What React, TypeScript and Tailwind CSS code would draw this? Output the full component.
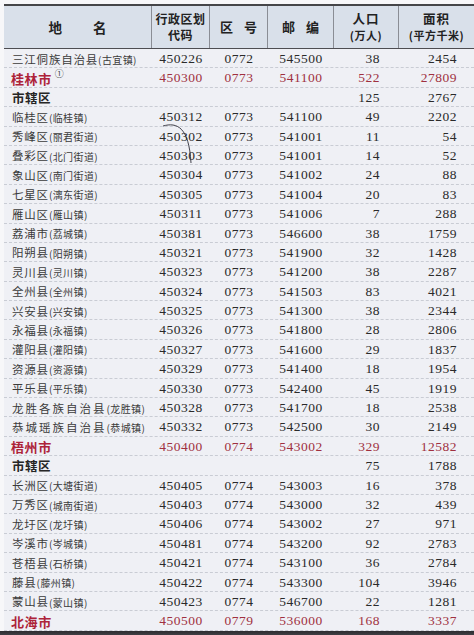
type Row = {
  name: string;
  town?: string;
  code?: string;
  area?: string;
  post?: string;
  pop: string;
  size: string;
  kind?: "city" | "sub";
  wide?: boolean;
  note?: boolean;
};

const rows: Row[] = [
  { name: "三江侗族自治县", town: "古宜镇", code: "450226", area: "0772", post: "545500", pop: "38", size: "2454" },
  { name: "桂林市", code: "450300", area: "0773", post: "541100", pop: "522", size: "27809", kind: "city", note: true },
  { name: "市辖区", pop: "125", size: "2767", kind: "sub" },
  { name: "临桂区", town: "临桂镇", code: "450312", area: "0773", post: "541100", pop: "49", size: "2202" },
  { name: "秀峰区", town: "丽君街道", code: "450302", area: "0773", post: "541001", pop: "11", size: "54" },
  { name: "叠彩区", town: "北门街道", code: "450303", area: "0773", post: "541001", pop: "14", size: "52" },
  { name: "象山区", town: "南门街道", code: "450304", area: "0773", post: "541002", pop: "24", size: "88" },
  { name: "七星区", town: "漓东街道", code: "450305", area: "0773", post: "541004", pop: "20", size: "83" },
  { name: "雁山区", town: "雁山镇", code: "450311", area: "0773", post: "541006", pop: "7", size: "288" },
  { name: "荔浦市", town: "荔城镇", code: "450381", area: "0773", post: "546600", pop: "38", size: "1759" },
  { name: "阳朔县", town: "阳朔镇", code: "450321", area: "0773", post: "541900", pop: "32", size: "1428" },
  { name: "灵川县", town: "灵川镇", code: "450323", area: "0773", post: "541200", pop: "38", size: "2287" },
  { name: "全州县", town: "全州镇", code: "450324", area: "0773", post: "541503", pop: "83", size: "4021" },
  { name: "兴安县", town: "兴安镇", code: "450325", area: "0773", post: "541300", pop: "38", size: "2344" },
  { name: "永福县", town: "永福镇", code: "450326", area: "0773", post: "541800", pop: "28", size: "2806" },
  { name: "灌阳县", town: "灌阳镇", code: "450327", area: "0773", post: "541600", pop: "29", size: "1837" },
  { name: "资源县", town: "资源镇", code: "450329", area: "0773", post: "541400", pop: "18", size: "1954" },
  { name: "平乐县", town: "平乐镇", code: "450330", area: "0773", post: "542400", pop: "45", size: "1919" },
  { name: "龙胜各族自治县", town: "龙胜镇", code: "450328", area: "0773", post: "541700", pop: "18", size: "2538", wide: true },
  { name: "恭城瑶族自治县", town: "恭城镇", code: "450332", area: "0773", post: "542500", pop: "30", size: "2149", wide: true },
  { name: "梧州市", code: "450400", area: "0774", post: "543002", pop: "329", size: "12582", kind: "city" },
  { name: "市辖区", pop: "75", size: "1788", kind: "sub" },
  { name: "长洲区", town: "大塘街道", code: "450405", area: "0774", post: "543003", pop: "16", size: "378" },
  { name: "万秀区", town: "城南街道", code: "450403", area: "0774", post: "543000", pop: "32", size: "439" },
  { name: "龙圩区", town: "龙圩镇", code: "450406", area: "0774", post: "543002", pop: "27", size: "971" },
  { name: "岑溪市", town: "岑城镇", code: "450481", area: "0774", post: "543200", pop: "92", size: "2783" },
  { name: "苍梧县", town: "石桥镇", code: "450421", area: "0774", post: "543100", pop: "36", size: "2784" },
  { name: "藤县", town: "藤州镇", code: "450422", area: "0774", post: "543300", pop: "104", size: "3946" },
  { name: "蒙山县", town: "蒙山镇", code: "450423", area: "0774", post: "546700", pop: "22", size: "1281" },
  { name: "北海市", code: "450500", area: "0779", post: "536000", pop: "168", size: "3337", kind: "city" },
];

const cjk = "font-['Noto_Sans_CJK_SC',sans-serif]";
const num = "font-['Liberation_Serif','Times_New_Roman',serif] text-[13.5px] tracking-[0.5px]";

function NameCell({ r }: { r: Row }) {
  if (r.kind === "city") {
    return (
      <div className={`pl-[7px] flex items-center text-[13px] font-bold tracking-[0.6px] text-[#ad2339] ${cjk}`}>
        {r.name}
        {r.note && <span className="ml-[3px] -mt-[9px] text-[9px] font-normal text-[#444]">①</span>}
      </div>
    );
  }
  if (r.kind === "sub") {
    return (
      <div className={`pl-[8px] flex items-center text-[12.5px] font-bold tracking-[0.5px] text-[#262626] ${cjk}`}>
        {r.name}
      </div>
    );
  }
  return (
    <div className={`pl-[8px] flex items-center text-[#3b3b3b] whitespace-nowrap ${cjk}`}>
      <span className={`text-[11.5px] ${r.wide ? "tracking-[2px]" : "tracking-[0.8px]"}`}>{r.name}</span>
      <span className="text-[10px] tracking-[0.4px]">({r.town})</span>
    </div>
  );
}

export default function App() {
  return (
    <div className="w-[474px] h-[635px] overflow-hidden bg-[#f7f7f9] pt-[4px] pl-[4px]">
      <div className="relative bg-[#eff0f5] border-t-2 border-[#454548]">
        {/* header */}
        <div
          className={`grid grid-cols-[148px_58px_58px_66px_65px_75px] h-[43px] bg-[#d9e0ea] border-b border-[#4d4d52] text-[#222] font-bold ${cjk}`}
        >
          <div className="flex items-center justify-center gap-[31px] text-[13.5px] border-r border-[#8a8d95]">
            <span>地</span>
            <span>名</span>
          </div>
          <div className="flex flex-col items-center justify-center text-[12px] leading-[16px] tracking-[0.5px] border-r border-[#8a8d95]">
            <span>行政区划</span>
            <span>代码</span>
          </div>
          <div className="flex items-center justify-center gap-[11px] text-[13px] border-r border-[#8a8d95]">
            <span>区</span>
            <span>号</span>
          </div>
          <div className="flex items-center justify-center gap-[11px] text-[13px] border-r border-[#8a8d95]">
            <span>邮</span>
            <span>编</span>
          </div>
          <div className="flex flex-col items-center justify-center leading-[16px] border-r border-[#8a8d95]">
            <span className="text-[12.5px] tracking-[1px]">人口</span>
            <span className="text-[11px] tracking-[0.5px] font-semibold">(万人)</span>
          </div>
          <div className="flex flex-col items-center justify-center leading-[16px]">
            <span className="text-[12.5px] tracking-[1px]">面积</span>
            <span className="text-[11px] tracking-[0.5px] font-semibold">(平方千米)</span>
          </div>
        </div>

        {/* body */}
        <div>
          {rows.map((r, i) => {
            const red = r.kind === "city";
            const numColor = red ? "text-[#a0303f]" : "text-[#2a2a2a]";
            return (
              <div
                key={i}
                className={`grid grid-cols-[148px_58px_58px_66px_65px_75px] h-[19.4px] border-b border-dashed border-[#c9ccd4] ${numColor}`}
              >
                <NameCell r={r} />
                <div className={`flex items-center justify-center ${num}`}>{r.code}</div>
                <div className={`flex items-center justify-center ${num}`}>{r.area}</div>
                <div className={`flex items-center justify-center ${num}`}>{r.post}</div>
                <div className={`flex items-center justify-end pr-[19px] ${num}`}>{r.pop}</div>
                <div className={`flex items-center justify-end pr-[17px] ${num}`}>{r.size}</div>
              </div>
            );
          })}
        </div>

        {/* pen mark over the codes */}
        <svg className="absolute left-[155px] top-[115px] pointer-events-none" width="40" height="50" viewBox="0 0 40 50">
          <path d="M4 5 C 18 1, 30 6, 32 42" fill="none" stroke="#2b2b35" strokeWidth="0.9" />
        </svg>
      </div>
      <div className="h-[6px] -ml-[4px] bg-gradient-to-b from-[#2c2c30] to-[#4a4a50]" />
    </div>
  );
}
